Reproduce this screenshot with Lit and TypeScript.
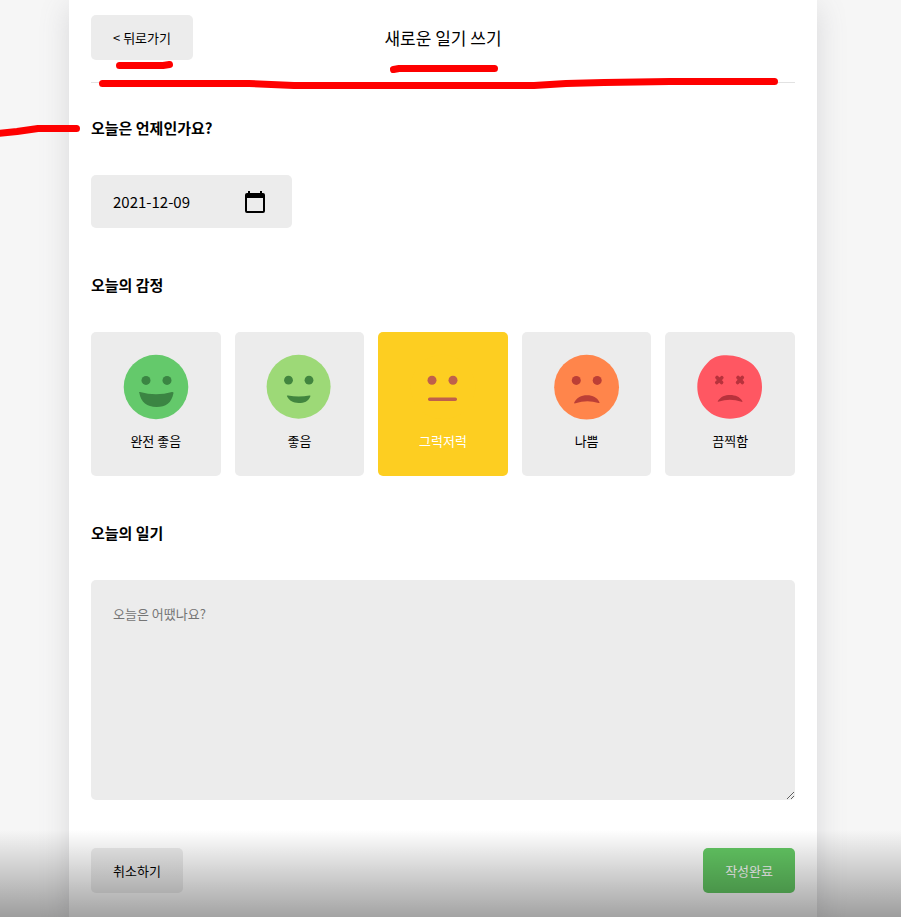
import { LitElement, html, css, svg } from "lit";
import { customElement, state } from "lit/decorators.js";

interface Emotion {
  id: number;
  label: string;
  face: unknown;
}

const EMOTIONS: Emotion[] = [
  {
    id: 1,
    label: "완전 좋음",
    face: svg`
      <circle cx="33" cy="33" r="32.3" fill="#64c96b"></circle>
      <g fill="#3b8543">
        <circle cx="23" cy="26.4" r="4.5"></circle>
        <circle cx="44" cy="26.4" r="4.5"></circle>
        <path d="M16.2 38.6Q15 37.8 17 38Q33 42.5 49 38Q51.2 37.8 50.4 39.5C48.5 49 43 53 33.500 53C24 53 18 48.500 16.200 38.600Z"></path>
      </g>`,
  },
  {
    id: 2,
    label: "좋음",
    face: svg`
      <circle cx="32.6" cy="32.8" r="32" fill="#9dd977"></circle>
      <g fill="#42853f">
        <circle cx="22.500" cy="26.200" r="4.400"></circle>
        <circle cx="43" cy="26.200" r="4.400"></circle>
        <path d="M21 42.300Q20.500 41.300 22 41.600Q33 43.600 43.500 41.500Q45 41.300 44.300 42.500C42 47.500 38.500 49 32.700 49C27 49 23.500 47 21 42.300Z"></path>
      </g>`,
  },
  {
    id: 3,
    label: "그럭저럭",
    face: svg`
      <circle cx="33" cy="33" r="32.3" fill="#fdce21"></circle>
      <g fill="#bf604b">
        <circle cx="22" cy="26.200" r="4.500"></circle>
        <circle cx="43" cy="26.200" r="4.500"></circle>
        <rect x="18" y="43.600" width="29" height="3.300" rx="1.600"></rect>
      </g>`,
  },
  {
    id: 4,
    label: "나쁨",
    face: svg`
      <circle cx="32.600" cy="33.200" r="32.400" fill="#ff854b"></circle>
      <g fill="#bc3f36">
        <circle cx="22.300" cy="26.400" r="4.500"></circle>
        <circle cx="43.200" cy="26.400" r="4.500"></circle>
        <path d="M20.200 48.500C23 43.500 27 41.300 33 41.300C39 41.300 43 43.500 45.500 48.200Q45.800 49.400 44.500 49Q33 45.500 21.500 49.300Q19.800 49.800 20.200 48.500Z"></path>
      </g>`,
  },
  {
    id: 5,
    label: "끔찍함",
    face: svg`
      <path fill="#ff5762" d="M24 1.600C34 0 46 3 54 9C61.500 15 65 23 65 33C65 52 51 64.700 33 64.700C14 64.700 0.300 51 0.300 33C0.300 23 4 16 9.500 10C14 5 18 2.500 24 1.600Z"></path>
      <g stroke="#b8323c" stroke-width="3.600" stroke-linecap="round">
        <path d="M20 23.500L24.600 28.500M24.800 23.700L19.800 28.500"></path>
        <path d="M41 23.500L45.400 28.500M45.300 23.500L40.600 28.500"></path>
      </g>
      <path fill="#b8323c" d="M20.800 47C24 42.500 28 41 33 41C38.500 41 43 43 45.300 47Q45.800 48.300 44.500 47.700Q33 43.800 22 47.500Q20.300 48 20.800 47Z"></path>`,
  },
];

@customElement("app-root")
export class AppRoot extends LitElement {
  @state() private selected = 3;

  static styles = css`
    :host {
      display: block;
      box-sizing: border-box;
      min-height: 100vh;
      padding-right: 15px;
      position: relative;
      overflow: hidden;
      background: #f6f6f6;
      color: #000;
      font-family: "Noto Sans CJK KR", sans-serif;
      font-size: 13px;
      line-height: 20px;
    }
    *,
    *::before {
      box-sizing: border-box;
    }
    .page {
      max-width: 748px;
      min-height: 100vh;
      margin: 0 auto;
      padding: 0 22px 24px;
      background: #fff;
      box-shadow: rgba(100, 100, 111, 0.2) 0 7px 29px 0;
    }
    .header {
      display: grid;
      grid-template-columns: 1fr auto 1fr;
      align-items: center;
      padding: 15px 0 22px;
      border-bottom: 1px solid #e2e2e2;
    }
    .title {
      margin: 0;
      font-size: 17px;
      font-weight: 400;
      line-height: 24px;
    }
    .button {
      justify-self: start;
      height: 45px;
      padding: 0 22px;
      border: 0;
      border-radius: 5px;
      background: #ececec;
      color: #000;
      font: inherit;
      white-space: nowrap;
      cursor: pointer;
    }
    .positive {
      background: #64c964;
      color: #fff;
    }
    .form {
      display: grid;
      gap: 45px;
      padding-top: 33px;
    }
    .section {
      display: grid;
      gap: 35px;
      min-width: 0;
      margin: 0;
    }
    .heading {
      margin: 0;
      font-size: 15px;
      font-weight: 700;
      line-height: 24px;
    }
    .date {
      display: flex;
      align-items: center;
      width: 201px;
      height: 53px;
      padding: 0 27px 0 22px;
      border-radius: 5px;
      background: #ececec;
    }
    .date-input {
      flex: 1;
      min-width: 0;
      padding: 0;
      border: 0;
      background: none;
      color: inherit;
      font: inherit;
      font-size: 15px;
    }
    .picker {
      display: block;
      padding: 0;
      border: 0;
      background: none;
      cursor: pointer;
    }
    .icon {
      display: block;
    }
    .emotions {
      display: grid;
      grid-template-columns: repeat(5, 1fr);
      gap: 14px;
    }
    .emotion {
      display: flex;
      flex-direction: column;
      align-items: center;
      gap: 11px;
      min-height: 144px;
      padding: 22px 0;
      border-radius: 5px;
      background: #ececec;
      cursor: pointer;
      position: relative;
    }
    .emotion.on {
      background: #fdce21;
      color: #fff;
    }
    .radio {
      position: absolute;
      opacity: 0;
      pointer-events: none;
    }
    .diary {
      display: block;
      width: 100%;
      height: 220px;
      padding: 22px;
      border: 0;
      border-radius: 5px;
      background: #ececec;
      color: inherit;
      font: inherit;
      line-height: 24px;
      resize: vertical;
    }
    .diary::placeholder {
      color: #757575;
    }
    .footer {
      display: flex;
      justify-content: space-between;
      padding-top: 3px;
    }
    .shade {
      position: absolute;
      inset: auto 0 0;
      height: 87px;
      background: linear-gradient(rgba(0, 0, 0, 0), rgba(0, 0, 0, 0.36));
      pointer-events: none;
    }
    .marks {
      position: absolute;
      top: 0;
      left: 0;
      pointer-events: none;
    }
  `;

  render() {
    return html`
      <div class="page">
        <header class="header">
          <button class="button" type="button">&lt; 뒤로가기</button>
          <h1 class="title">새로운 일기 쓰기</h1>
        </header>
        <form class="form" @submit=${(e: Event) => e.preventDefault()}>
          <section class="section">
            <h2 class="heading"><label for="date">오늘은 언제인가요?</label></h2>
            <div class="date">
              <input class="date-input" id="date" type="text" value="2021-12-09" />
              <button class="picker" type="button" aria-label="날짜 선택">
                <svg class="icon" width="20" height="22" viewBox="0 0 20 22" aria-hidden="true">
                  <path fill-rule="evenodd" d="M3 0H5V2H15V0H17V2H18Q20 2 20 4V20Q20 22 18 22H2Q0 22 0 20V4Q0 2 2 2H3ZM2 7V20H18V7Z"></path>
                </svg>
              </button>
            </div>
          </section>
          <section class="section">
            <h2 class="heading" id="emotion">오늘의 감정</h2>
            <div class="emotions" role="radiogroup" aria-labelledby="emotion">
              ${EMOTIONS.map(
                (e) => html`
                  <label class="emotion ${e.id === this.selected ? "on" : ""}">
                    <input
                      class="radio"
                      type="radio"
                      name="emotion"
                      .checked=${e.id === this.selected}
                      @change=${() => (this.selected = e.id)}
                    />
                    <svg class="icon" width="66" height="66" viewBox="0 0 66 66" aria-hidden="true">${e.face}</svg>
                    <span>${e.label}</span>
                  </label>
                `
              )}
            </div>
          </section>
          <section class="section">
            <h2 class="heading"><label for="diary">오늘의 일기</label></h2>
            <textarea class="diary" id="diary" placeholder="오늘은 어땠나요?"></textarea>
          </section>
          <div class="footer">
            <button class="button" type="button">취소하기</button>
            <button class="button positive" type="submit">작성완료</button>
          </div>
        </form>
      </div>
      <div class="shade"></div>
      <svg
        class="marks"
        width="901"
        height="140"
        viewBox="0 0 901 140"
        fill="none"
        stroke="#fe0000"
        stroke-width="7"
        stroke-linecap="round"
        stroke-linejoin="round"
        aria-hidden="true"
      >
        <path d="M119.500 65.500H163L169.500 64.500"></path>
        <path d="M393.500 69.500L399 68.500H494.500"></path>
        <path d="M102.500 83.500H249L294 85.500H534L566 83.500L604 82.500L670 81.500H774.500"></path>
        <path d="M-2 133.500L17 131.500L38 128.500H76.500"></path>
      </svg>
    `;
  }
}
